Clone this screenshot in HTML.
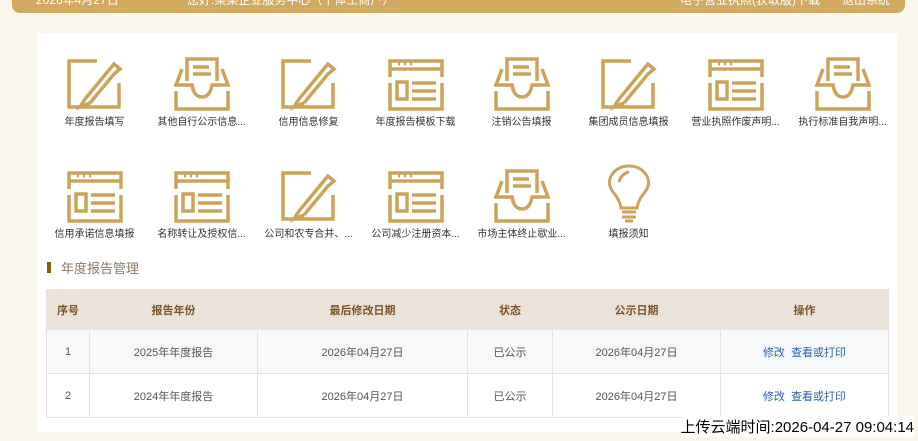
<!DOCTYPE html><html><head><meta charset="utf-8"><style>
body{margin:0;width:918px;height:441px;background:#faf6ec;position:relative;overflow:hidden;font-family:"Liberation Sans","Noto Sans CJK SC",sans-serif}
.bar{position:absolute;left:12px;top:-10px;width:893px;height:23px;background:#d2aa5f;border-radius:0 0 8px 8px;color:#fff;font-size:12px}
.panel{position:absolute;left:38px;top:33px;width:859px;height:399px;background:#fff}
.c{position:absolute;width:107px;text-align:center;font-size:10px;color:#333}
.c svg{display:block;margin:0 auto 2px}
.t{position:absolute;left:47px;top:258px;font-size:13px;color:#8a7a66}
.t:before{content:"";position:absolute;left:0;top:4px;width:4px;height:11px;background:#8a5a1a}
table{position:absolute;left:46px;top:289px;border-collapse:collapse;font-size:11px;color:#555}
td,th{border:1px solid #e6e2dc;text-align:center;padding:0}
th{background:#ebe3d9;color:#7a5428;height:39px;font-weight:bold}
tr.r1 td{background:#f7f8fa;height:43px}
tr.r2 td{background:#fff;height:43px}
a{color:#2f5fa8;text-decoration:none}
.up{position:absolute;right:4px;top:416px;font-size:15px;color:#000;background:#fff}
</style></head><body>
<div class="bar"><span style="position:absolute;left:24px;top:1px">2026年4月27日</span><span style="position:absolute;left:175px;top:1px">您好:某某企业服务中心（个体工商户）</span><span style="position:absolute;left:668px;top:1px">电子营业执照(获取版)下载</span><span style="position:absolute;left:830px;top:1px">退出系统</span></div>
<div class="panel"></div>
<svg width="0" height="0" style="position:absolute"><defs>
<g id="pen" fill="none" stroke="#cda35a" stroke-width="3.5"><path d="M32 6H4V52H54V28"/><path d="M20 44L44 15M25 48L49 19M20 44L15 52L25 48M44 15L49 9L55 14L49 19"/></g>
<g id="box" fill="none" stroke="#cda35a" stroke-width="3.5"><path d="M15 26V4H45V26M21 12H37M21 19H39"/><path d="M10 14L4 30H20Q22 42 30 42Q38 42 40 30H56L50 14"/><path d="M4 36V54H56V36"/></g>
<g id="tpl" fill="none" stroke="#cda35a" stroke-width="3.5"><path d="M4 22V6H56V22M4 14H56"/><path d="M4 28V54H56V28"/><rect x="11" y="27" width="10" height="17"/><path d="M26 28H50M26 36H50M26 44H50"/><path d="M12 9H14M18 9H20M24 9H26" stroke-width="3"/></g>
<g id="bulb" fill="none" stroke="#cda35a" stroke-width="3"><path d="M22 44Q21 36 14 28Q8 20 12 12Q18 2 30 2Q42 2 48 12Q52 20 46 28Q39 36 38 44Z"/><path d="M20 18Q22 10 30 8"/><path d="M23 48H37M23 53H37M26 57H34"/></g>
</defs></svg>
<div class="c" style="left:41px;top:55px"><svg width="60" height="56"><use href="#pen"/></svg>年度报告填写</div>
<div class="c" style="left:148px;top:55px"><svg width="60" height="56"><use href="#box"/></svg>其他自行公示信息...</div>
<div class="c" style="left:255px;top:55px"><svg width="60" height="56"><use href="#pen"/></svg>信用信息修复</div>
<div class="c" style="left:362px;top:55px"><svg width="60" height="56"><use href="#tpl"/></svg>年度报告模板下载</div>
<div class="c" style="left:468px;top:55px"><svg width="60" height="56"><use href="#box"/></svg>注销公告填报</div>
<div class="c" style="left:575px;top:55px"><svg width="60" height="56"><use href="#pen"/></svg>集团成员信息填报</div>
<div class="c" style="left:682px;top:55px"><svg width="60" height="56"><use href="#tpl"/></svg>营业执照作废声明...</div>
<div class="c" style="left:789px;top:55px"><svg width="60" height="56"><use href="#box"/></svg>执行标准自我声明...</div>
<div class="c" style="left:41px;top:167px"><svg width="60" height="56"><use href="#tpl"/></svg>信用承诺信息填报</div>
<div class="c" style="left:148px;top:167px"><svg width="60" height="56"><use href="#tpl"/></svg>名称转让及授权信...</div>
<div class="c" style="left:255px;top:167px"><svg width="60" height="56"><use href="#pen"/></svg>公司和农专合并、...</div>
<div class="c" style="left:362px;top:167px"><svg width="60" height="56"><use href="#tpl"/></svg>公司减少注册资本...</div>
<div class="c" style="left:468px;top:167px"><svg width="60" height="56"><use href="#box"/></svg>市场主体终止歇业...</div>
<div class="c" style="left:575px;top:164px"><svg width="60" height="59"><use href="#bulb"/></svg>填报须知</div>
<div class="t"><span style="margin-left:14px">年度报告管理</span></div>
<table><tr><th style="width:42px">序号</th><th style="width:167px">报告年份</th><th style="width:209px">最后修改日期</th><th style="width:84px">状态</th><th style="width:167px">公示日期</th><th style="width:167px">操作</th></tr>
<tr class="r1"><td>1</td><td>2025年年度报告</td><td>2026年04月27日</td><td>已公示</td><td>2026年04月27日</td><td><a>修改</a>&nbsp; <a>查看或打印</a></td></tr>
<tr class="r2"><td>2</td><td>2024年年度报告</td><td>2026年04月27日</td><td>已公示</td><td>2026年04月27日</td><td><a>修改</a>&nbsp; <a>查看或打印</a></td></tr></table>
<div class="up">上传云端时间:2026-04-27 09:04:14</div>
</body></html>
